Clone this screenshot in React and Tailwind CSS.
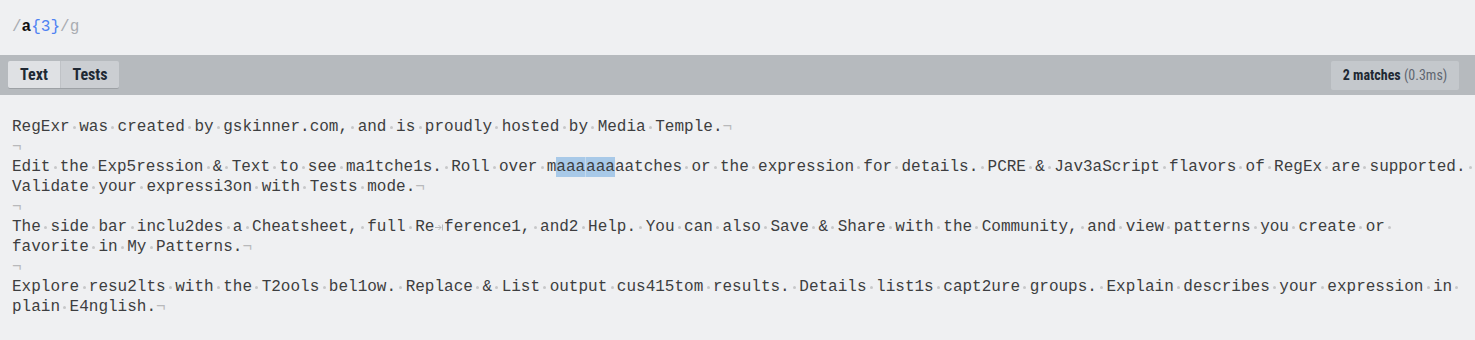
import React from "react";

const MONO = { fontFamily: '"Liberation Mono", "DejaVu Sans Mono", monospace' };

const lines = [
  ["RegExr was created by gskinner.com, and is proudly hosted by Media Temple.¬"],
  ["¬"],
  [
    "Edit the Exp5ression & Text to see ma1tche1s. Roll over m",
    { hl: "aaa" },
    { hl: "aaa" },
    "aatches or the expression for details. PCRE & Jav3aScript flavors of RegEx are supported. ",
  ],
  ["Validate your expressi3on with Tests mode.¬"],
  ["¬"],
  ["The side bar inclu2des a Cheatsheet, full Re\tference1, and2 Help. You can also Save & Share with the Community, and view patterns you create or "],
  ["favorite in My Patterns.¬"],
  ["¬"],
  ["Explore resu2lts with the T2ools bel1ow. Replace & List output cus415tom results. Details list1s capt2ure groups. Explain describes your expression in "],
  ["plain E4nglish.¬"],
];

function renderChars(str, keyBase) {
  const out = [];
  let buf = "";
  const flush = (k) => {
    if (buf) {
      out.push(<span key={keyBase + "t" + k}>{buf}</span>);
      buf = "";
    }
  };
  [...str].forEach((ch, i) => {
    if (ch === " ") {
      flush(i);
      out.push(
        <span key={keyBase + "s" + i} className="inline-flex w-[9.6px] h-[20px] items-center justify-center align-top">
          <span className="block w-[3px] h-[3px] rounded-full bg-[#c6c7c9]" />
        </span>
      );
    } else if (ch === "¬") {
      flush(i);
      out.push(
        <span key={keyBase + "p" + i} className="text-[#b8b9bb]">
          ¬
        </span>
      );
    } else if (ch === "\t") {
      flush(i);
      out.push(
        <span key={keyBase + "tab" + i} className="inline-flex w-[9.6px] h-[20px] items-center justify-center align-top">
          <svg width="9" height="7" viewBox="0 0 9 7" fill="none" stroke="#b8b9bb" strokeWidth="1">
            <path d="M0 3.5H6M3.5 1L6 3.5L3.5 6M7.5 0.5V6.5" />
          </svg>
        </span>
      );
    } else {
      buf += ch;
    }
  });
  flush("end");
  return out;
}

export default function App() {
  return (
    <div className="w-[1475px] h-[340px] overflow-hidden bg-[#eff0f2] flex flex-col">
      {/* Expression header */}
      <div className="h-[55px] shrink-0 bg-[#eff0f2] px-[12px] pt-[17px]">
        <div className="text-[16px] leading-[20px] whitespace-pre" style={MONO}>
          <span className="text-[#a9acb1]">/</span>
          <span className="text-[#111] font-bold">a</span>
          <span className="text-[#4e82f2]">{"{3}"}</span>
          <span className="text-[#a9acb1]">/g</span>
        </div>
      </div>

      {/* Toolbar */}
      <div
        className="h-[40px] shrink-0 bg-[#b6babe] flex items-start justify-between pl-[8px] pr-[16px] pt-[6px]"
        style={{ fontFamily: '"Roboto Condensed", "Liberation Sans Narrow", "Arial Narrow", Roboto, sans-serif' }}
      >
        <div className="flex shadow-[0_1px_0_#9da1a5] rounded-[2px]">
          <div className="w-[52px] h-[27px] bg-[#dfe1e4] flex items-center justify-center text-[16px] font-bold text-[#202833] rounded-l-[2px]">
            Text
          </div>
          <div className="w-[1px] h-[27px] bg-[#bfc2c6]" />
          <div className="w-[58px] h-[27px] bg-[#cbced2] flex items-center justify-center text-[16px] font-bold text-[#202833] rounded-r-[2px]">
            Tests
          </div>
        </div>
        <div className="w-[128px] h-[29px] bg-[#c4c8cc] rounded-[2px] flex items-center justify-center text-[14px] whitespace-pre">
          <span className="font-bold text-[#202833]">2 matches</span>
          <span className="text-[#5f6670]"> (0.3ms)</span>
        </div>
      </div>

      {/* Text area */}
      <div className="flex-1 bg-[#eff0f2] pl-[12px] pt-[22px] text-[16px] leading-[20px] text-[#3d3e40]" style={MONO}>
        {lines.map((parts, li) => (
          <div key={li} className="h-[20px] whitespace-pre flex">
            {parts.map((p, pi) =>
              typeof p === "string" ? (
                <React.Fragment key={pi}>{renderChars(p, `${li}-${pi}-`)}</React.Fragment>
              ) : (
                <span key={pi} className={"bg-[#a8c9e8]" + (pi === 2 ? " border-l border-[#c4daee]" : "")}>
                  {p.hl}
                </span>
              )
            )}
          </div>
        ))}
      </div>
    </div>
  );
}
